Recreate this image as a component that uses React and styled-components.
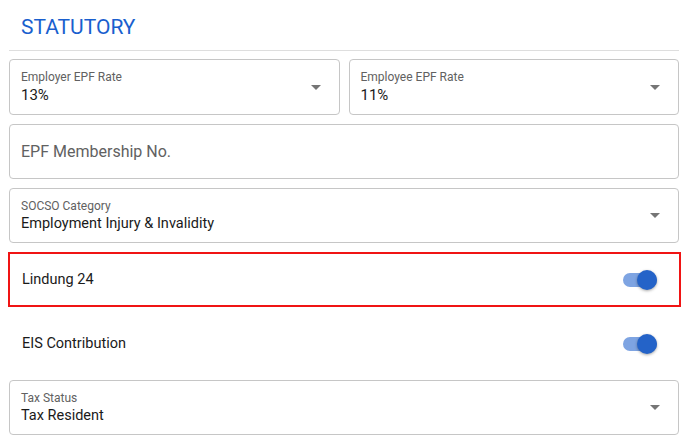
import styled, { createGlobalStyle } from 'styled-components';

const GlobalStyle = createGlobalStyle`
  body {
    margin: 0;
    background: #ffffff;
    font-family: Roboto, "Noto Sans", sans-serif;
  }
`;

export default function App() {
  return (
    <>
      <GlobalStyle />
      <Page>
        <Title>STATUTORY</Title>
        <Divider />
        <Fields>
          <Pair>
            <SelectField label="Employer EPF Rate" value="13%" />
            <SelectField label="Employee EPF Rate" value="11%" />
          </Pair>
          <Field>
            <Placeholder>EPF Membership No.</Placeholder>
          </Field>
          <SelectField label="SOCSO Category" value="Employment Injury & Invalidity" small />
          <ToggleRow highlighted>
            <RowText>Lindung 24</RowText>
            <Switch />
          </ToggleRow>
          <ToggleRow>
            <RowText>EIS Contribution</RowText>
            <Switch />
          </ToggleRow>
          <SelectField label="Tax Status" value="Tax Resident" small />
        </Fields>
      </Page>
    </>
  );
}

function SelectField({ label, value, small }) {
  return (
    <Field>
      <FieldText>
        <Label>{label}</Label>
        <Value small={small}>{value}</Value>
      </FieldText>
      <Arrow />
    </Field>
  );
}

function Switch() {
  return (
    <SwitchBox>
      <Track />
      <Knob />
    </SwitchBox>
  );
}

const Page = styled.div`
  padding: 14px 10px 0 9px;
`;

const Title = styled.div`
  font-size: 21px;
  line-height: 26px;
  color: #1a5fce;
  padding-left: 12px;
  margin-bottom: 10px;
`;

const Divider = styled.div`
  height: 1px;
  background: #dedede;
  margin-bottom: 8px;
`;

const Fields = styled.div`
  display: flex;
  flex-direction: column;
  gap: 9px;
`;

const Pair = styled.div`
  display: grid;
  grid-template-columns: 1fr 1fr;
  gap: 9px;

  & > div {
    height: 56px;
  }
`;

const Field = styled.div`
  box-sizing: border-box;
  height: 55px;
  border: 1px solid #c6c6c6;
  border-radius: 4px;
  padding: 0 18px 0 11px;
  display: flex;
  align-items: center;
  justify-content: space-between;
`;

const FieldText = styled.div`
  display: flex;
  flex-direction: column;
  gap: 2px;
`;

const Label = styled.div`
  font-size: 12px;
  line-height: 14px;
  color: #616161;
`;

const Value = styled.div`
  font-size: ${p => (p.small ? '14.5px' : '15px')};
  line-height: 18px;
  color: #1a1a1a;
`;

const Placeholder = styled.div`
  font-size: 16px;
  color: #616161;
`;

const Arrow = styled.div`
  width: 0;
  height: 0;
  border-left: 5px solid transparent;
  border-right: 5px solid transparent;
  border-top: 5px solid #757575;
`;

const ToggleRow = styled.div`
  box-sizing: border-box;
  height: 55px;
  display: flex;
  align-items: center;
  justify-content: space-between;
  padding: 0 22px 0 12px;
  border: 2px solid ${p => (p.highlighted ? '#f01414' : 'transparent')};
  margin: 0 -2px 0 -1px;
`;

const RowText = styled.div`
  font-size: 14.5px;
  color: #1a1a1a;
`;

const SwitchBox = styled.div`
  position: relative;
  width: 34px;
  height: 20px;
  display: flex;
  align-items: center;
`;

const Track = styled.div`
  width: 34px;
  height: 14px;
  border-radius: 7px;
  background: #7ea4e2;
`;

const Knob = styled.div`
  position: absolute;
  right: 0;
  top: 0;
  width: 20px;
  height: 20px;
  border-radius: 50%;
  background: #2463c8;
  box-shadow: 0 1px 3px rgba(0, 0, 0, 0.35);
`;
